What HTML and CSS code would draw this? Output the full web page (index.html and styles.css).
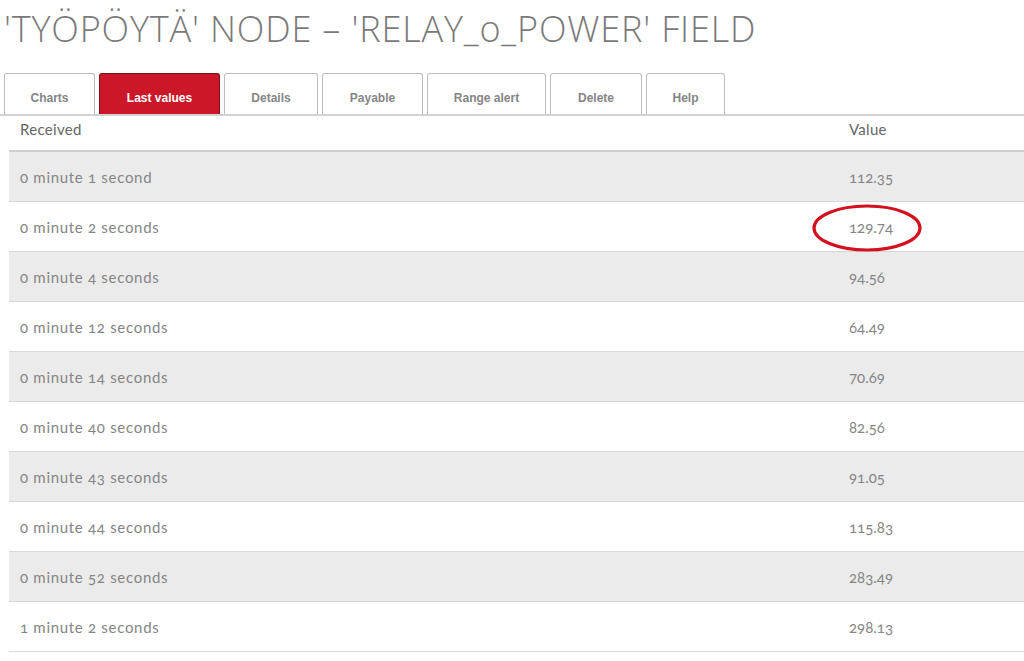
FILE: index.html
```
<!DOCTYPE html>
<html>
<head>
<meta charset="utf-8">
<link rel="stylesheet" href="styles.css">
</head>
<body>
<h1 class="title">'TYÖPÖYTÄ' NODE – 'RELAY_o_POWER' FIELD</h1>
<div class="tabs">
  <div class="tab w-charts">Charts</div>
  <div class="tab active w-last">Last values</div>
  <div class="tab w-details">Details</div>
  <div class="tab w-payable">Payable</div>
  <div class="tab w-range">Range alert</div>
  <div class="tab w-delete">Delete</div>
  <div class="tab w-help">Help</div>
</div>
<table class="data">
  <thead>
    <tr><th class="c1">Received</th><th class="c2">Value</th></tr>
  </thead>
  <tbody>
    <tr><td>0 minute 1 second</td><td>112.35</td></tr>
    <tr><td>0 minute 2 seconds</td><td><span class="circled">129.74<svg class="ring" width="112" height="50" viewBox="0 0 112 50"><ellipse cx="56" cy="25" rx="53" ry="22" fill="none" stroke="#d4101e" stroke-width="3.2"/></svg></span></td></tr>
    <tr><td>0 minute 4 seconds</td><td>94.56</td></tr>
    <tr><td>0 minute 12 seconds</td><td>64.49</td></tr>
    <tr><td>0 minute 14 seconds</td><td>70.69</td></tr>
    <tr><td>0 minute 40 seconds</td><td>82.56</td></tr>
    <tr><td>0 minute 43 seconds</td><td>91.05</td></tr>
    <tr><td>0 minute 44 seconds</td><td>115.83</td></tr>
    <tr><td>0 minute 52 seconds</td><td>283.49</td></tr>
    <tr><td>1 minute 2 seconds</td><td>298.13</td></tr>
  </tbody>
</table>
</body>
</html>
```
FILE: styles.css
```
html, body {
  margin: 0;
  padding: 0;
  background: #fff;
}
body {
  font-family: "Lato", "Open Sans", sans-serif;
  color: #888;
}
.title {
  margin: 0;
  padding: 7px 0 0 4px;
  height: 66px;
  box-sizing: border-box;
  font-family: "Open Sans", sans-serif;
  font-weight: 300;
  font-size: 36px;
  line-height: 44px;
  color: #7a7a7a;
  letter-spacing: 0.85px;
  white-space: nowrap;
}
.tabs {
  display: flex;
  gap: 4px;
  padding: 7px 0 0 4px;
  height: 41px;
  border-bottom: 2px solid #d2d2d2;
}
.tab {
  box-sizing: border-box;
  height: 41px;
  border: 1px solid #bdbdbd;
  border-bottom: none;
  border-radius: 3px 3px 0 0;
  font-family: "Liberation Sans", Arial, sans-serif;
  font-weight: bold;
  font-size: 12px;
  color: #858585;
  display: flex;
  align-items: center;
  justify-content: center;
  padding-top: 7px;
  background: #fff;
}
.tab.active {
  background: #cb1727;
  border: 1px solid #7a1018;
  border-bottom: none;
  color: #fff;
}
.w-charts { width: 91px; }
.w-last { width: 121px; }
.w-details { width: 94px; }
.w-payable { width: 101px; }
.w-range { width: 119px; }
.w-delete { width: 92px; }
.w-help { width: 79px; }

.data {
  margin-left: 9px;
  width: 1015px;
  border-collapse: collapse;
  font-size: 15px;
  font-feature-settings: "onum" 1;
}
.data th {
  text-align: left;
  font-weight: normal;
  color: #666;
  height: 35px;
  padding: 4px 0 0 11px;
  vertical-align: top;
  box-sizing: border-box;
  letter-spacing: 0.3px;
  border-bottom: 2px solid #cfcfcf;
}
.data th.c2 {
  width: 175px;
  padding-left: 0;
}
.data td {
  height: 49px;
  padding: 0 0 0 11px;
  border-bottom: 1px solid #d8d8d8;
  color: #858585;
  letter-spacing: 0.7px;
}
.data td + td {
  padding-left: 0;
  letter-spacing: 0;
}
.data tbody tr:nth-child(odd) td {
  background: #ebebeb;
}
.circled {
  position: relative;
  display: inline-block;
}
.ring {
  position: absolute;
  left: -38px;
  top: -15px;
}
```
